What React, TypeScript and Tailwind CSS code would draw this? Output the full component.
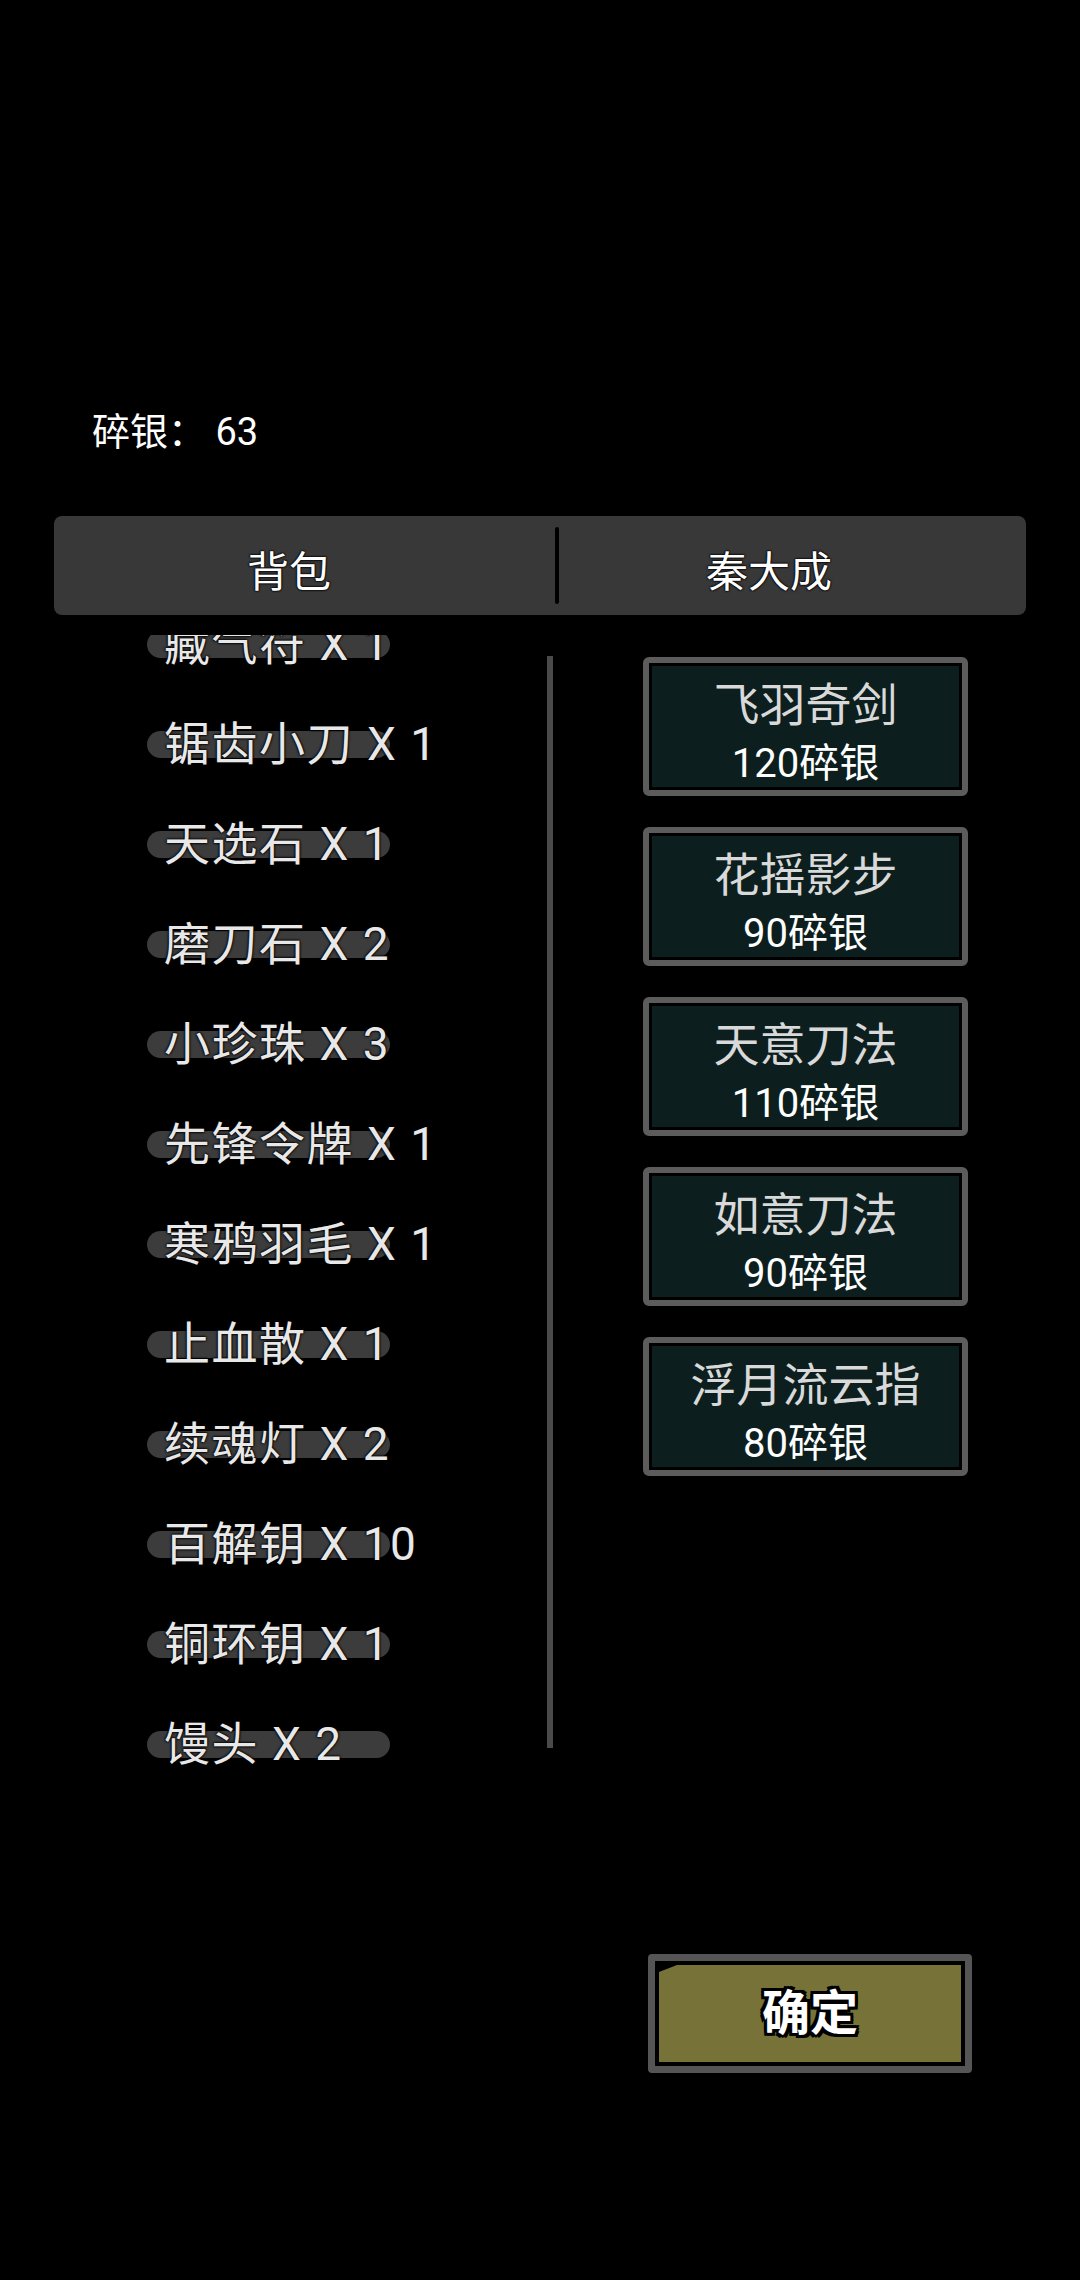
const items = [
  "藏气符 X 1",
  "锯齿小刀 X 1",
  "天选石 X 1",
  "磨刀石 X 2",
  "小珍珠 X 3",
  "先锋令牌 X 1",
  "寒鸦羽毛 X 1",
  "止血散 X 1",
  "续魂灯 X 2",
  "百解钥 X 10",
  "铜环钥 X 1",
  "馒头 X 2",
];

const shop = [
  { name: "飞羽奇剑", price: "120碎银" },
  { name: "花摇影步", price: "90碎银" },
  { name: "天意刀法", price: "110碎银" },
  { name: "如意刀法", price: "90碎银" },
  { name: "浮月流云指", price: "80碎银" },
];

export default function App() {
  return (
    <div className="w-[1080px] h-[2280px] overflow-hidden bg-black text-white font-['Roboto','Noto_Sans_CJK_SC',sans-serif]">
      {/* 碎银 */}
      <div className="pt-[406px] pl-[92px] text-[38px] leading-[52px]">碎银： 63</div>

      {/* tabs */}
      <div className="mx-[54px] mt-[58px] flex h-[99px] items-center rounded-[8px] bg-[#383838] text-[42px] [text-shadow:0_0_2px_#000,0_0_2px_#000,0_0_2px_#000]">
        <div className="w-[501px] pr-[31px] pt-[14px] text-center">背包</div>
        <div className="h-[77px] w-[4px] rounded-full bg-black" />
        <div className="flex-1 pr-[47px] pt-[14px] text-center">秦大成</div>
      </div>

      <div className="flex h-[1155px] pl-[54px]">
        {/* bag list */}
        <div className="mt-[20px] h-[1150px] w-[493px] overflow-hidden">
          <div className="-mt-[41px]">
            {items.map((it) => (
              <div key={it} className="relative flex h-[100px] items-center pl-[110px]">
                <div className="absolute left-[93px] top-[37px] h-[27px] w-[243px] rounded-full bg-[#3c3c3c]" />
                <span className="relative whitespace-pre text-[46px] leading-[56px] tracking-[1.5px] text-[#e8e8e8] [text-shadow:0_0_2px_#000,0_0_2px_#000,0_0_3px_#000]">
                  {it}
                </span>
              </div>
            ))}
          </div>
        </div>
        <div className="mt-[41px] h-[1092px] w-[6px] bg-[#4a4a4a]" />

        {/* shop */}
        <div className="flex flex-col gap-[31px] pl-[90px] pt-[42px]">
          {shop.map((s) => (
            <div key={s.name} className="h-[139px] w-[325px] rounded-[6px] border-[6px] border-[#5c5c5c] bg-black p-[3px]">
              <div className="flex h-full flex-col items-center bg-[#0c1f1e] pt-[11px]">
                <div className="text-[46px] leading-[56px] text-[#d9d9d9]">{s.name}</div>
                <div className="mt-[9px] text-[40px] leading-[44px] text-white">{s.price}</div>
              </div>
            </div>
          ))}
        </div>
      </div>

      {/* confirm */}
      <div className="mt-[184px] pl-[648px]">
        <div className="h-[119px] w-[324px] rounded-[4px] border-[7px] border-[#555555] bg-black p-[4px]">
          <div className="flex h-full items-center justify-center bg-[#777338] [clip-path:polygon(18px_0,100%_0,100%_100%,0_100%,0_7px)]">
            <span className="text-[48px] font-bold leading-[56px] text-white [text-shadow:-3px_-3px_0_#000,3px_-3px_0_#000,-3px_3px_0_#000,3px_3px_0_#000,0_3px_0_#000,0_-3px_0_#000,3px_0_0_#000,-3px_0_0_#000]">
              确定
            </span>
          </div>
        </div>
      </div>
    </div>
  );
}
